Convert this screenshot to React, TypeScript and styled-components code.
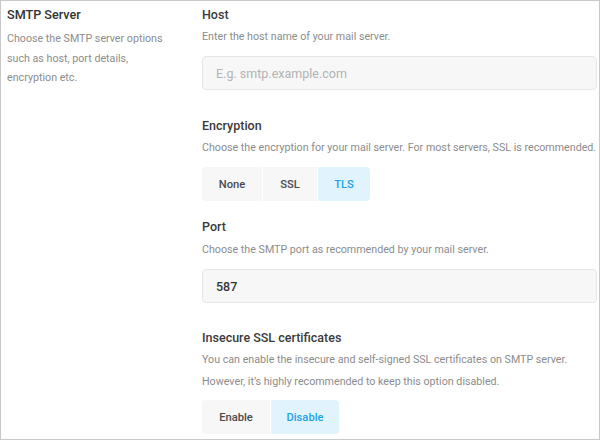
import React from "react";
import styled, { createGlobalStyle } from "styled-components";

const Global = createGlobalStyle`
  html, body { margin: 0; padding: 0; background: #fff; }
  body { font-family: Roboto, "Liberation Sans", Arial, sans-serif; }
  * { box-sizing: border-box; }
`;

const Panel = styled.div`
  width: 600px;
  height: 440px;
  border: 1px solid #c9c9c9;
  display: grid;
  grid-template-columns: 195px 1fr;
  padding: 4px 2px 0 6px;
  overflow: hidden;
`;

const Side = styled.div`
  display: flex;
  flex-direction: column;
`;

const SideTitle = styled.div`
  font-size: 12.6px;
  font-weight: 500;
  line-height: 20px;
  color: #333;
  margin-bottom: 4px;
`;

const SideText = styled.div`
  font-size: 10.7px;
  line-height: 19.7px;
  color: #8c8c8c;
  width: 168px;
`;

const Main = styled.div`
  display: flex;
  flex-direction: column;
`;

const Section = styled.div<{ $after: number }>`
  display: flex;
  flex-direction: column;
  margin-bottom: ${(p) => p.$after}px;
`;

const Label = styled.div`
  font-size: 12.5px;
  font-weight: 500;
  line-height: 20px;
  color: #3a3a3a;
  margin-bottom: 1px;
`;

const Help = styled.div<{ $gap?: number; $lh?: number }>`
  font-size: 10.7px;
  line-height: ${(p) => p.$lh ?? 22}px;
  color: #8c8c8c;
  margin-top: ${(p) => p.$gap ?? 0}px;
  margin-bottom: 8px;
  white-space: nowrap;
`;

const Field = styled.input`
  height: 34px;
  width: 100%;
  background: #f7f7f7;
  border: 1px solid #e6e6e6;
  border-radius: 4px;
  padding: 0 13px;
  font-family: Roboto, "Liberation Sans", Arial, sans-serif;
  font-size: 12.5px;
  font-weight: 500;
  color: #333;
  outline: none;
  &::placeholder {
    color: #b3b3b3;
    font-weight: 400;
  }
`;

const Group = styled.div`
  display: flex;
  align-self: flex-start;
  border-radius: 4px;
  overflow: hidden;
`;

const Choice = styled.button<{ $active?: boolean; $w: number }>`
  height: 34px;
  width: ${(p) => p.$w}px;
  border: none;
  border-left: 1px solid #fff;
  &:first-child { border-left: none; }
  background: ${(p) => (p.$active ? "#e1f4fe" : "#f7f7f7")};
  color: ${(p) => (p.$active ? "#1ea2e6" : "#4a4a4a")};
  font-family: Roboto, "Liberation Sans", Arial, sans-serif;
  font-size: 11.2px;
  font-weight: 500;
  padding: 0;
  cursor: pointer;
`;

export default function App() {
  return (
    <>
      <Global />
      <Panel>
        <Side>
          <SideTitle>SMTP Server</SideTitle>
          <SideText>
            Choose the SMTP server options such as host, port details,
            encryption etc.
          </SideText>
        </Side>
        <Main>
          <Section $after={26}>
            <Label>Host</Label>
            <Help>Enter the host name of your mail server.</Help>
            <Field placeholder="E.g. smtp.example.com" />
          </Section>
          <Section $after={16}>
            <Label>Encryption</Label>
            <Help>
              Choose the encryption for your mail server. For most servers, SSL
              is recommended.
            </Help>
            <Group>
              <Choice $w={60}>None</Choice>
              <Choice $w={55}>SSL</Choice>
              <Choice $w={53} $active>
                TLS
              </Choice>
            </Group>
          </Section>
          <Section $after={25}>
            <Label>Port</Label>
            <Help $gap={1}>
              Choose the SMTP port as recommended by your mail server.
            </Help>
            <Field defaultValue="587" />
          </Section>
          <Section $after={0}>
            <Label>Insecure SSL certificates</Label>
            <Help $lh={21.5}>
              You can enable the insecure and self-signed SSL certificates on
              SMTP server.
              <br />
              However, it’s highly recommended to keep this option disabled.
            </Help>
            <Group>
              <Choice $w={68}>Enable</Choice>
              <Choice $w={69} $active>
                Disable
              </Choice>
            </Group>
          </Section>
        </Main>
      </Panel>
    </>
  );
}
